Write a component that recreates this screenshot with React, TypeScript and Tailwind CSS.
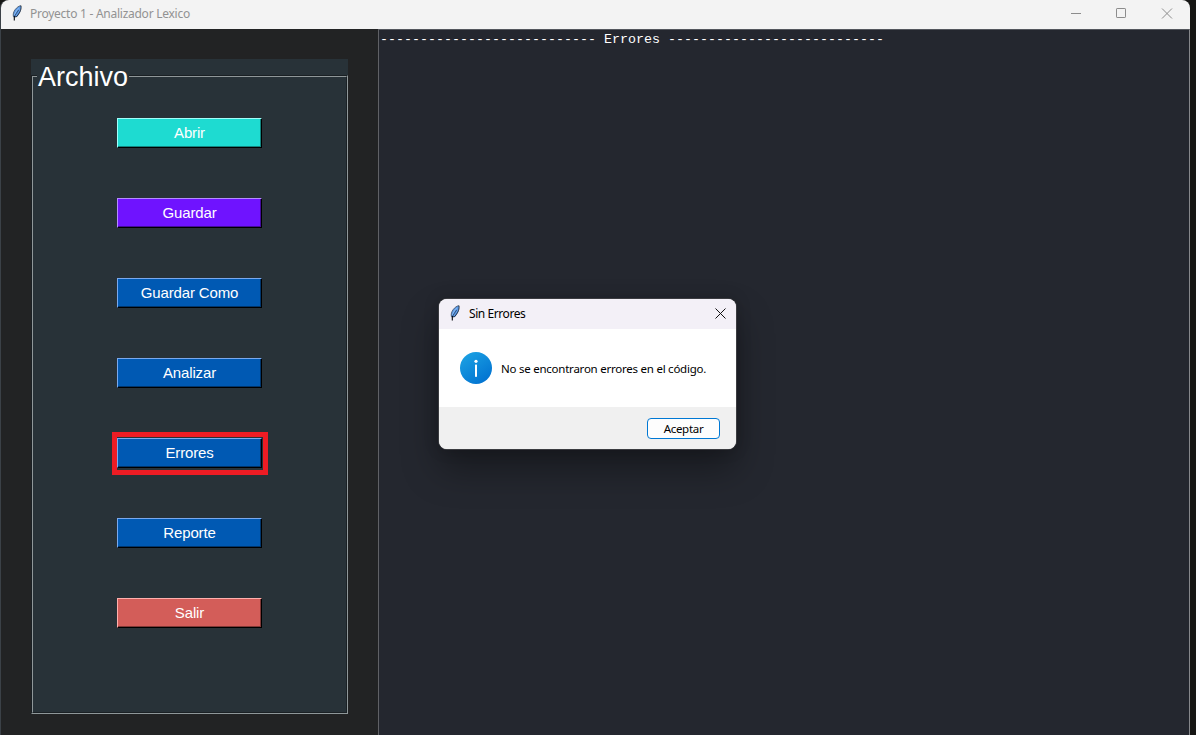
import React from 'react';

function Feather() {
  return (
    <svg width="16" height="16" viewBox="0 0 16 16" fill="none">
      <path d="M12 0.7C10 0.8 7.8 2.4 6 4.8C4.4 7 3.8 9.4 4.4 12L7.6 12C10.6 9.4 12.5 5.2 12 0.7Z" fill="#5f9ce8" />
      <path d="M12 0.7C10 0.8 7.8 2.4 6 4.8C4.5 7 3.9 9.3 4.4 11.6" stroke="#3b4b5e" strokeWidth="0.8" />
      <path d="M12 0.7C12.4 3 11.8 5.2 10.8 7.2L9.6 9L7.8 11.6L5.4 12" stroke="#10151d" strokeWidth="0.8" />
      <path d="M9.8 3.2C7.8 5 6.3 7.4 5.6 10" stroke="#8dbdf3" strokeWidth="1" />
      <path d="M9.6 5C8 7.4 6 10.2 5.1 12.2" stroke="#1c304c" strokeWidth="0.7" />
      <path d="M5.3 11V15.4" stroke="#07090d" strokeWidth="1.1" />
    </svg>
  );
}

const buttons = [
  { label: 'Abrir', look: 'bg-[#1edbd1] border-t-[#a0fffb] border-l-[#a0fffb] shadow-[inset_-1px_-1px_0_#128580]' },
  { label: 'Guardar', look: 'bg-[#6f13ff] border-t-[#b58bff] border-l-[#b58bff] shadow-[inset_-1px_-1px_0_#430b9b]' },
  { label: 'Guardar Como', look: 'bg-[#0059b3] border-t-[#7aa9ee] border-l-[#7aa9ee] shadow-[inset_-1px_-1px_0_#00366d]' },
  { label: 'Analizar', look: 'bg-[#0059b3] border-t-[#7aa9ee] border-l-[#7aa9ee] shadow-[inset_-1px_-1px_0_#00366d]' },
  { label: 'Errores', marked: true, look: 'bg-[#0059b3] border-t-[#7aa9ee] border-l-[#7aa9ee] shadow-[inset_-1px_-1px_0_#00366d]' },
  { label: 'Reporte', look: 'bg-[#0059b3] border-t-[#7aa9ee] border-l-[#7aa9ee] shadow-[inset_-1px_-1px_0_#00366d]' },
  { label: 'Salir', look: 'bg-[#d35d59] border-t-[#ffb0ad] border-l-[#ffb0ad] shadow-[inset_-1px_-1px_0_#803836]' },
];

function TitleBar() {
  return (
    <header className="flex h-[29px] shrink-0 items-center rounded-t-lg bg-[#f3f3f3] pr-[17px] pl-[8px]">
      <div className="-mt-[3px]"><Feather /></div>
      <h1 className="-mt-px ml-[5px] font-['Noto_Sans',sans-serif] text-[12px] leading-4 tracking-[-0.26px] whitespace-nowrap text-[#929292]">
        Proyecto 1 - Analizador Lexico
      </h1>
      <div className="-mt-[3px] ml-auto flex items-center gap-[34px]">
        <svg width="11" height="11" fill="none" stroke="#8c8c8c"><path d="M0 5.5H10" /></svg>
        <svg width="11" height="11" fill="none" stroke="#8c8c8c"><rect x="0.5" y="0.5" width="9" height="9" rx="0.6" /></svg>
        <svg width="12" height="11" fill="none" stroke="#8c8c8c"><path d="M1 0.5L11 10.5M11 0.5L1 10.5" /></svg>
      </div>
    </header>
  );
}

function Sidebar() {
  return (
    <aside className="w-[377px] shrink-0 bg-[#222324] pt-[30px] pl-[30px]">
      <section className="flex h-[655px] w-[317px] flex-col bg-[#283238] pt-4">
        <div className="flex grow border border-t-[#1a2024] border-r-[#8f9799] border-b-[#8f9799] border-l-[#1a2024]">
          <div className="flex grow flex-col items-center border border-t-[#8f9799] border-r-[#1a2024] border-b-[#1a2024] border-l-[#8f9799]">
            <h2 className="-mt-[16px] ml-[4px] h-[32px] self-start bg-[#283238] pr-px pl-px font-['Liberation_Sans',sans-serif] text-[27px] leading-[33px] text-white">
              Archivo
            </h2>
            <div className="mt-[25px] -ml-px flex flex-col gap-[50px]">
              {buttons.map((b) => (
                <div key={b.label} className="relative h-[30px] w-[145px]">
                  <button
                    className={`block h-full w-full border border-r-black border-b-black pl-px font-['Liberation_Sans',sans-serif] text-[15px] leading-7 tracking-[-0.15px] text-white ${b.look}`}
                  >
                    {b.label}
                  </button>
                  {b.marked && <div className="absolute -top-[6px] -left-[5px] h-[43px] w-[156px] border-[5px] border-[#ed1c24]" />}
                </div>
              ))}
            </div>
          </div>
        </div>
      </section>
    </aside>
  );
}

function MessageDialog() {
  return (
    <div
      role="dialog"
      className="absolute top-[299px] left-[439px] flex h-[150px] w-[297px] flex-col overflow-hidden rounded-lg bg-white text-black shadow-[0_0_0_1px_#3b3c40,0_20px_36px_rgba(0,0,0,0.35),0_0_16px_rgba(0,0,0,0.2)]"
    >
      <div className="flex h-[30px] shrink-0 items-center bg-[#f3f0f7] pr-[10px] pl-[8px]">
        <div className="-mt-[3px]"><Feather /></div>
        <span className="ml-[6px] font-['Noto_Sans',sans-serif] text-[12px] leading-4 tracking-[-0.42px]">Sin Errores</span>
        <svg className="-mt-[2px] ml-auto" width="11" height="11" fill="none" stroke="#111"><path d="M0.5 0.5L10.5 10.5M10.5 0.5L0.5 10.5" /></svg>
      </div>
      <div className="flex h-[78px] shrink-0 items-center pl-[21px]">
        <svg width="32" height="32" viewBox="0 0 32 32">
          <defs>
            <linearGradient id="info" x1="0.15" y1="0" x2="0.85" y2="1">
              <stop offset="0" stopColor="#1ca2e3" />
              <stop offset="1" stopColor="#0070d0" />
            </linearGradient>
          </defs>
          <circle cx="16" cy="16" r="16" fill="url(#info)" />
          <circle cx="16" cy="9.3" r="1.6" fill="#fff" />
          <rect x="15" y="12.6" width="2" height="12.2" fill="#fff" />
        </svg>
        <p className="mt-[2px] ml-[9px] font-['Noto_Sans',sans-serif] text-[11.5px] leading-4 tracking-[-0.24px] whitespace-nowrap">
          No se encontraron errores en el código.
        </p>
      </div>
      <div className="flex grow justify-end bg-[#f0f0f0] pt-[11px] pr-4">
        <button className="h-[21px] w-[73px] rounded-[4px] border border-[#0078d4] bg-[#fdfdfd] font-['Noto_Sans',sans-serif] text-[11.5px] leading-[20px] tracking-[-0.3px]">
          Aceptar
        </button>
      </div>
    </div>
  );
}

export default function App() {
  return (
    <div className="relative h-[735px] w-[1196px] overflow-hidden bg-[#161614]">
      <div className="flex h-full w-[1190px] flex-col rounded-tl-lg border-l border-[#3b4147]">
        <TitleBar />
        <div className="flex grow">
          <Sidebar />
          <main className="grow border-t border-r border-l border-t-[#54575d] border-r-[#85878b] border-l-[#606166] bg-[#24272f] pt-[2px] pl-px">
            <pre className="font-['Liberation_Mono',monospace] text-[13.333px] leading-4 text-white">
              {'--------------------------- Errores ---------------------------'}
            </pre>
          </main>
        </div>
      </div>
      <MessageDialog />
    </div>
  );
}
